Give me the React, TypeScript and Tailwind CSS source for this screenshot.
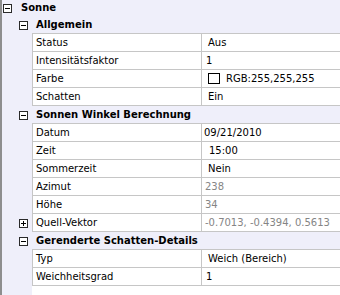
import React from "react";

const Box = ({ plus = false }: { plus?: boolean }) => (
  <svg width="9" height="9" viewBox="0 0 9 9" className="block">
    <rect x="0.5" y="0.5" width="8" height="8" fill="#ffffff" stroke="#2a2a2a" />
    <line x1="2" y1="4.5" x2="7" y2="4.5" stroke="#000" />
    {plus && <line x1="4.5" y1="2" x2="4.5" y2="7" stroke="#000" />}
  </svg>
);

type Prop = {
  name: string;
  value: React.ReactNode;
  gray?: boolean;
  pl?: string;
  plus?: boolean;
};

const Row = ({ name, value, gray, pl = "pl-[3px]", plus }: Prop) => (
  <div className="flex h-[18px]">
    <div className="w-[30px] shrink-0 flex items-center pl-[17px]">
      {plus && <Box plus />}
    </div>
    <div className="flex flex-1 border-l border-b border-[#c6c6c6] bg-white">
      <div className="w-[168px] shrink-0 pl-[3px] flex items-center leading-[17px]">{name}</div>
      <div
        className={`flex-1 border-l border-[#c6c6c6] flex items-center leading-[17px] ${pl} ${
          gray ? "text-[#858585]" : "text-black"
        }`}
      >
        {value}
      </div>
    </div>
  </div>
);

const Section = ({ title }: { title: string }) => (
  <div className="flex h-[18px]">
    <div className="w-[30px] shrink-0 flex items-center pl-[17px]">
      <Box />
    </div>
    <div className="flex-1 border-b border-[#c6c6c6] flex items-center pl-[4px] font-bold leading-[17px]">
      {title}
    </div>
  </div>
);

export default function App() {
  return (
    <div
      className="w-[340px] h-[295px] overflow-hidden flex flex-col border-l-2 border-[#8e8e8e] bg-[#efeffa] text-black text-[10px]"
      style={{ fontFamily: '"DejaVu Sans", Verdana, sans-serif' }}
    >
      <div className="flex h-[16px] items-center">
        <div className="pl-[1px] pr-[9px]">
          <Box />
        </div>
        <div className="font-bold leading-[16px]">Sonne</div>
      </div>
      <Section title="Allgemein" />
      <Row name="Status" value="Aus" pl="pl-[6px]" />
      <Row name="Intensitätsfaktor" value="1" pl="pl-[4px]" />
      <Row
        name="Farbe"
        value={
          <div className="flex items-center">
            <div className="w-[12px] h-[11px] border border-black bg-white mr-[6px]" />
            <span>RGB:255,255,255</span>
          </div>
        }
        pl="pl-[6px]"
      />
      <Row name="Schatten" value="Ein" pl="pl-[6px]" />
      <Section title="Sonnen Winkel Berechnung" />
      <Row name="Datum" value="09/21/2010" pl="pl-[2px]" />
      <Row name="Zeit" value="15:00" pl="pl-[7px]" />
      <Row name="Sommerzeit" value="Nein" pl="pl-[6px]" />
      <Row name="Azimut" value="238" gray pl="pl-[3px]" />
      <Row name="Höhe" value="34" gray pl="pl-[3px]" />
      <Row name="Quell-Vektor" value="-0.7013, -0.4394, 0.5613" gray pl="pl-[3px]" plus />
      <Section title="Gerenderte Schatten-Details" />
      <Row name="Typ" value="Weich (Bereich)" pl="pl-[6px]" />
      <Row name="Weichheitsgrad" value="1" pl="pl-[4px]" />
      <div className="flex flex-1">
        <div className="w-[30px] shrink-0" />
        <div className="flex-1 bg-white" />
      </div>
    </div>
  );
}
